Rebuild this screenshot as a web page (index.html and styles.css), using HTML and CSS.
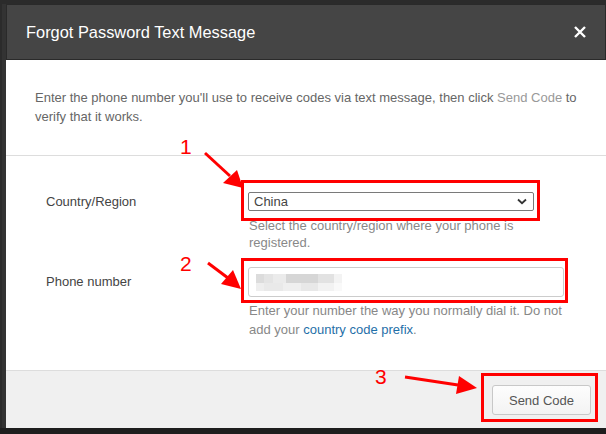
FILE: index.html
```html
<!DOCTYPE html>
<html lang="en">
<head>
    <meta charset="UTF-8">
    <title>Forgot Password Text Message</title>
    <link rel="stylesheet" href="styles.css">
</head>
<body>
    <div class="screen">
        <div class="modal">
            <div class="modal-header">
                <h1 class="modal-title">Forgot Password Text Message</h1>
                <span class="close-btn">
                    <svg width="12" height="12" viewBox="0 0 12 12"><path d="M1 1L11 11M11 1L1 11" stroke="#fff" stroke-width="2.4"/></svg>
                </span>
            </div>

            <div class="modal-intro">
                <p>Enter the phone number you'll use to receive codes via text message, then click <span class="muted-link">Send Code</span> to verify that it works.</p>
            </div>

            <div class="modal-form">
                <div class="form-row row-country">
                    <label class="form-label">Country/Region</label>
                    <div class="form-field">
                        <div class="select-box">
                            <span>China</span>
                            <svg width="10" height="7" viewBox="0 0 10 7"><path d="M1 1.5L5 5.2L9 1.5" fill="none" stroke="#333" stroke-width="1.8"/></svg>
                        </div>
                        <p class="help">Select the country/region where your phone is registered.</p>
                    </div>
                </div>

                <div class="form-row row-phone">
                    <label class="form-label">Phone number</label>
                    <div class="form-field">
                        <div class="text-input"><span class="blurred"></span></div>
                        <p class="help help-phone">Enter your number the way you normally dial it. Do not add your <span class="link">country code prefix</span>.</p>
                    </div>
                </div>
            </div>

            <div class="modal-footer">
                <button class="btn">Send Code</button>
            </div>
        </div>

        <!-- red annotations drawn over the screenshot -->
        <svg class="annotations" width="606" height="434" viewBox="0 0 606 434">
            <g fill="none" stroke="#f00" stroke-width="3">
                <rect x="242.5" y="181.5" width="296" height="38"/>
                <rect x="242.5" y="259.5" width="324" height="42"/>
                <rect x="482.5" y="374.5" width="114" height="46"/>
                <line x1="205" y1="153" x2="230" y2="176"/>
                <line x1="208" y1="263" x2="228" y2="278"/>
                <line x1="405" y1="377" x2="458" y2="385"/>
            </g>
            <g fill="#f00">
                <polygon points="243,188 223,183 237,170"/>
                <polygon points="241,289 221,284 233,270"/>
                <polygon points="477,388 456,394 459,376"/>
            </g>
            <g class="anno-num" fill="#f00">
                <text x="180" y="154">1</text>
                <text x="180" y="271">2</text>
                <text x="375" y="384">3</text>
            </g>
        </svg>
    </div>
</body>
</html>
```

FILE: styles.css
```css
body {
    margin: 0;
    background-color: #1e1e1e;
    font-family: "Liberation Sans", Arial, sans-serif;
}
.screen {
    position: relative;
    width: 606px;
    height: 428px;
    padding: 4px 0 0 2px;
    box-sizing: border-box;
    background-color: #2b2b2b;
}
.modal {
    height: 424px;
    border-left: 4px solid #333;
    background-color: #fff;
    display: flex;
    flex-direction: column;
}
.modal-header {
    height: 56px;
    box-sizing: border-box;
    background-color: #454545;
    border: 1px solid #2a2a2a;
    display: flex;
    align-items: center;
    justify-content: space-between;
    padding: 0 19px 0 19px;
}
.modal-title {
    margin: 0;
    font-size: 16.4px;
    font-weight: normal;
    color: #fff;
}
.close-btn {
    display: flex;
}
.modal-intro {
    height: 96px;
    box-sizing: border-box;
    padding: 28px 16px 0 29px;
    border-bottom: 1px solid #ddd;
}
.modal-intro p {
    margin: 0;
    font-size: 13px;
    line-height: 19px;
    color: #666;
}
.muted-link {
    color: #999;
}
.modal-form {
    flex: 1;
    padding: 36px 42px 0 40px;
    border-bottom: 1px solid #ddd;
}
.form-row {
    display: grid;
    grid-template-columns: 202px 316px;
}
.row-phone {
    margin-top: 16px;
}
.form-label {
    font-size: 13px;
    color: #444;
    align-self: start;
}
.row-country .form-label {
    line-height: 19px;
}
.row-phone .form-label {
    line-height: 30px;
}
.select-box {
    width: 286px;
    height: 19px;
    box-sizing: border-box;
    border: 1px solid #7a7a7a;
    border-radius: 2px;
    display: flex;
    align-items: center;
    justify-content: space-between;
    padding: 0 6px 0 5px;
    font-size: 13px;
    color: #444;
}
.help {
    margin: 6px 0 0 1px;
    font-size: 13px;
    line-height: 17px;
    color: #888;
}
.help-phone {
    margin-top: 4px;
    line-height: 19px;
}
.link {
    color: #1f6fa8;
}
.text-input {
    height: 30px;
    box-sizing: border-box;
    border: 1px solid #ccc;
    border-radius: 3px;
    display: flex;
    align-items: center;
    padding-left: 7px;
}
.blurred {
    width: 86px;
    height: 17px;
    background:
        linear-gradient(to right, #dcdcdc 0 8px, #e4e4e4 8px 17px, #ebebeb 17px 30px, #d6d6d6 30px 62px, #e2e2e2 62px 78px, #f3f3f3 78px) top / 100% 9px no-repeat,
        linear-gradient(to right, #eeeeee 0 8px, #e9e9e9 8px 27px, #efefef 27px 45px, #e8e8e8 45px 62px, #f2f2f2 62px 78px, #f9f9f9 78px) bottom / 100% 8px no-repeat;
}
.modal-footer {
    height: 57px;
    background-color: #f0f0f0;
    display: flex;
    align-items: center;
    justify-content: flex-end;
    padding-right: 15px;
}
.btn {
    width: 99px;
    height: 30px;
    font-family: inherit;
    font-size: 13px;
    color: #555;
    background: linear-gradient(#fdfdfd, #f3f3f3);
    border: 1px solid #c8c8c8;
    border-radius: 3px;
    margin-top: 1px;
}
.annotations {
    position: absolute;
    left: 0;
    top: 0;
    pointer-events: none;
}
.anno-num {
    font-family: "Liberation Sans", Arial, sans-serif;
    font-size: 21px;
}
```
